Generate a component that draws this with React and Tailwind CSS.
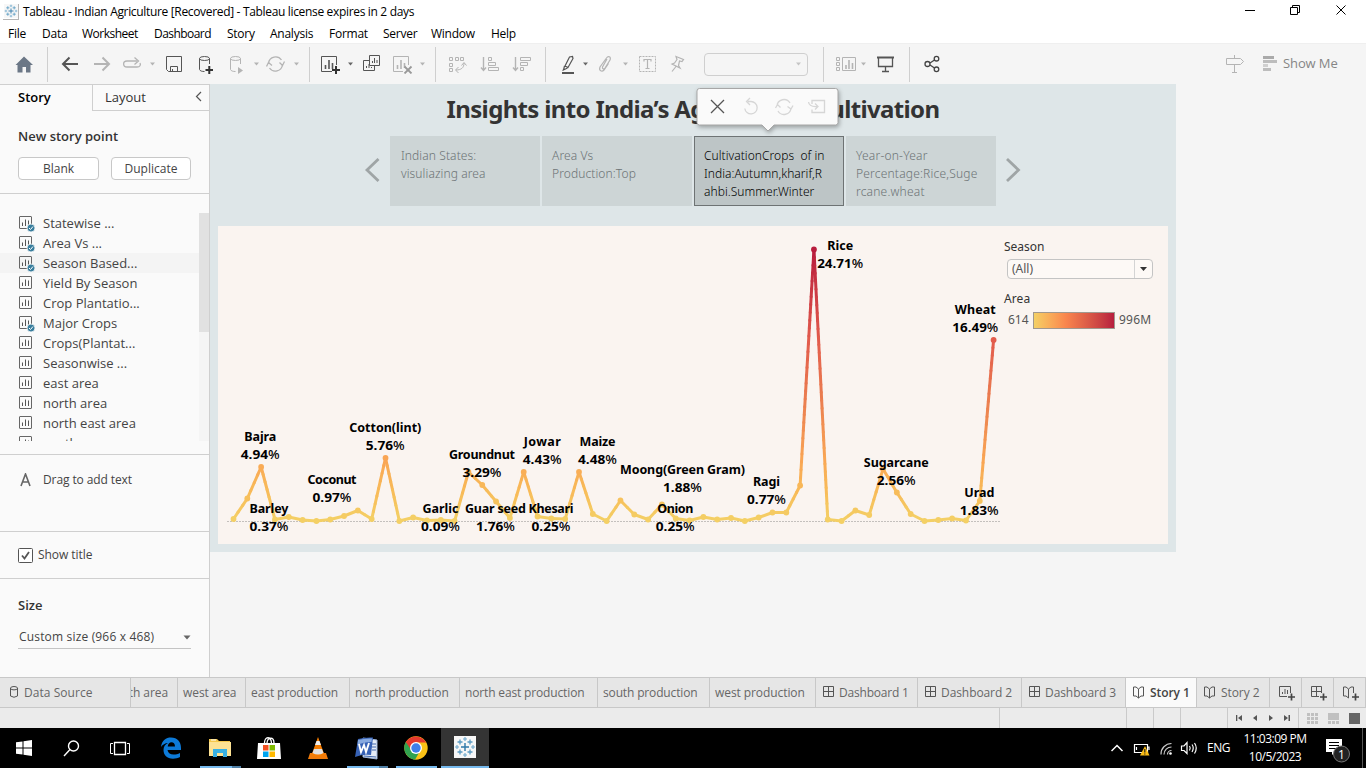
import React from "react";

const UI = "font-['Open_Sans','Noto_Sans',sans-serif]";
const LIGHT = "#b4b4b4";

/* Toolbar ------------------------------------------------------------- */

function Ic({ vb, w = 20, h = 20, c = "#666", className = "", children, sw = 1 }) {
  return (
    <svg className={"shrink-0 " + className} width={w} height={h} viewBox={vb} fill="none" stroke={c} strokeWidth={sw}>
      {children}
    </svg>
  );
}
function Caret({ className, c = "#b4b4b4" }) {
  return (
    <svg className={"shrink-0 " + className} width="7" height="6" viewBox="0 0 7 6">
      <path d="M1 1.5H6L3.5 4.5Z" fill={c} />
    </svg>
  );
}
const Sep = ({ className }) => <div className={"h-[35px] w-px shrink-0 bg-[#cfcfcf] " + className} />;

function Toolbar() {
  return (
    <div className="flex h-[41px] shrink-0 items-center border-t border-[#efefef] bg-[#f5f5f5]">
      <Ic className="ml-[14px]" vb="14 54 20 20">
        <path d="M24 56.5L33 65H30.5V72.5H26V67H22.5V72.5H17.5V65H15.5Z" fill="#6b7786" stroke="none" />
      </Ic>
      <Sep className="ml-[13px]" />
      <Ic className="ml-[12px]" vb="60 54 20 20" sw={2} c="#555"><path d="M78 64H63.5M69.5 57.5L63 64L69.5 70.5" /></Ic>
      <Ic className="ml-[12px]" vb="92 54 20 20" sw={2} c={LIGHT}><path d="M94 64H109M102.500 57.5L109 64L102.500 70.500" /></Ic>
      <Ic className="ml-[10px]" vb="122 54 20 20" sw={1.3} c={LIGHT}>
        <path d="M137 61H127C122.500 61 122.500 67 127 67H137C140 67 141 65 140 63" /><path d="M134.500 57.500L138.500 61L134.500 64.500" />
      </Ic>
      <Caret className="ml-[7px]" />
      <Ic className="ml-[8px]" vb="164 54 20 20" c="#555"><path d="M166.500 56.500H181.500V71.500H168.500L166.500 69.500ZM170.500 71.500V66.500H177.500V71.500M172.500 69V71" /></Ic>
      <Ic className="ml-[12px]" vb="196 54 20 20" c="#555">
        <ellipse cx="204.500" cy="58.500" rx="5" ry="2" /><path d="M199.500 58.500V69.500C200 71 202 71.500 204.500 71.500M209.500 58.500V64" /><path d="M205.500 70H213M209.300 66V74" stroke="#333" strokeWidth="2" />
      </Ic>
      <Ic className="ml-[12px]" vb="228 54 20 20" c={LIGHT}>
        <ellipse cx="235.500" cy="58.500" rx="5" ry="2" /><path d="M230.500 58.500V69.500C231 71 233 71.500 235.500 71.500M240.500 58.500V64" /><path d="M238 67L243 70.500L238 74Z" fill={LIGHT} stroke="none" />
      </Ic>
      <Caret className="ml-[5px]" />
      <Ic className="ml-[6px]" vb="266 54 20 20" c={LIGHT} sw={1.3}>
        <path d="M268.500 63A7.200 7.200 0 0 1 281.500 60M282.500 65A7.200 7.200 0 0 1 269.500 68" /><path d="M279.500 62.500L282.500 65.500L284.500 61.500M266.500 66.500L268.500 62.500L272 65.500" />
      </Ic>
      <Caret className="ml-[7px]" />
      <Sep className="ml-[9px]" />
      <Ic className="ml-[10px]" w={22} vb="320 54 22 20" c="#555">
        <path d="M336.500 65V56.500H321.500V71.500H332" /><path d="M325.500 65V69M329 60V69M332.500 63V69" strokeWidth="1.600" /><path d="M332 70H340M336 66V74" stroke="#333" strokeWidth="2" />
      </Ic>
      <Caret className="ml-[5px]" c="#666" />
      <Ic className="ml-[7px]" w={22} vb="361 54 22 20" c="#555">
        <path d="M369.500 55.500H379.500V65.500H369.500ZM369 60.500H363.500V70.500H374.500V66M372.500 63V61M374.500 63V58M377 63V60M366.500 68V66M369 68V64M371.500 68V67" />
      </Ic>
      <Ic className="ml-[9px]" w={22} vb="392 54 22 20" c={LIGHT}>
        <path d="M408.500 65V56.500H393.500V71.500H403" /><path d="M397.500 65V69M401 60V69M404.500 63V68" strokeWidth="1.600" /><path d="M404.500 66.500L411.500 73.500M411.500 66.500L404.500 73.500" strokeWidth="1.800" stroke="#999" />
      </Ic>
      <Caret className="ml-[5px]" />
      <Sep className="ml-[9px]" />
      <Ic className="ml-[12px]" vb="448 54 20 20" c={LIGHT}>
        <path d="M449.500 57.500H452.500V60.500H449.500ZM455.500 57.500H458.500V60.500H455.500ZM460.500 57.500H463.500V60.500H460.500ZM449.500 63.500H452.500V66.500H449.500ZM449.500 68.500H452.500V71.500H449.500Z" />
        <path d="M456 70C461 70 464 68 464 63M458.500 67L455.500 70L458.500 73M461.500 65.500L464 62.500L466.500 65.500" />
      </Ic>
      <Ic className="ml-[12px]" vb="480 54 20 20" c={LIGHT}>
        <path d="M483.500 57V70M481 67.500L483.500 70.500L486 67.500" strokeWidth="1.400" /><path d="M488.500 57.500H491.500V60.500H488.500ZM488.500 62.500H495.500V65.500H488.500ZM488.500 67.500H498.500V70.500H488.500Z" />
      </Ic>
      <Ic className="ml-[12px]" vb="512 54 20 20" c={LIGHT}>
        <path d="M515.500 57V70M513 67.500L515.500 70.500L518 67.500" strokeWidth="1.400" /><path d="M520.500 57.500H530.500V60.500H520.500ZM520.500 62.500H527.500V65.500H520.500ZM520.500 67.500H523.500V70.500H520.500Z" />
      </Ic>
      <Sep className="ml-[13px]" />
      <Ic className="ml-[14px]" vb="560 54 20 20" c="#555" sw={1.2}>
        <path d="M565 66L569.500 57L572.500 56.500L573 58.500L568 67.500L565 66ZM564.500 66L563.500 70L567.500 68M562.500 70.500L565 69" /><path d="M562 73H574" strokeWidth="2" />
      </Ic>
      <Caret className="ml-[2px]" c="#666" />
      <Ic className="ml-[6px]" vb="595 54 20 20" c={LIGHT} sw={1.2}>
        <path d="M607 59L602.500 67C602 69 604 69.500 605 68L610 60C611.500 56.500 608 55.500 606.500 58L600 67C598.500 71 602 72 604 70L608.500 63.500" />
      </Ic>
      <Caret className="ml-[7px]" />
      <Ic className="ml-[9px]" vb="638 54 20 20" c={LIGHT}>
        <path d="M639.500 56.500H655.500V71.500H639.500Z" strokeDasharray="2 1" /><path d="M644 61.500V59.500H651V61.500M647.500 59.500V68.500M645.500 68.500H649.500" strokeWidth="1.200" />
      </Ic>
      <Ic className="ml-[10px]" vb="668 54 20 20" c={LIGHT} sw={1.2}>
        <path d="M676 56.500L683.500 59.500L682 61.500L679.500 61L678.500 65.500L680 68L672 64L674.500 63L677 59.500L676 56.500ZM676 66.500L672 71.500" />
      </Ic>
      <div className="ml-[16px] flex h-[23px] w-[104px] shrink-0 items-center rounded-sm border border-[#cfcfcf]"><Caret className="ml-[90px]" c="#c4c4c4" /></div>
      <Sep className="ml-[15px]" />
      <Ic className="ml-[11px]" w={22} vb="835 54 22 20" c={LIGHT}>
        <path d="M836.500 57.500H839.500V60.500H836.500ZM836.500 62.500H839.500V65.500H836.500ZM836.500 67.500H839.500V70.500H836.500ZM842.500 57.500H855.500V70.500H842.500Z" /><path d="M846 65V69M849 60V69M852.500 63V69" strokeWidth="1.600" />
      </Ic>
      <Caret className="ml-[3px]" />
      <Ic className="ml-[9px]" vb="876 54 20 20" c="#555"><path d="M877 57.500H894" strokeWidth="2" /><path d="M878.500 58V66.500H892.500V58M885.500 67V71.500M882 71.500H889" strokeWidth="1.300" /></Ic>
      <Sep className="ml-[13px]" />
      <Ic className="ml-[12px]" vb="922 54 20 20" c="#444" sw={1.3}>
        <circle cx="927.500" cy="64" r="2.500" /><circle cx="936.500" cy="58.700" r="2.300" /><circle cx="936.500" cy="69.300" r="2.300" /><path d="M930 63L934.500 60M930 65L934.500 68" />
      </Ic>
      <Ic className="ml-[283px]" vb="1225 54 20 20" c="#b4b4b4"><path d="M1226.500 58.500H1240.500L1243.500 61.500L1240.500 64.500H1226.500ZM1234.500 55V58M1234.500 65V72.500M1232 72.500H1237" /></Ic>
      <Ic className="ml-[17px]" w={16} vb="1262 54 16 20" c="none">
        <path d="M1263 56H1274V59H1263Z" fill="#aaa" /><path d="M1263 60H1277V63H1263ZM1263 68H1271V71H1263Z" fill="#bdbdbd" /><path d="M1263 64H1268V67H1263Z" fill="#d0d0d0" />
      </Ic>
      <span className="-mt-[2px] ml-[5px] whitespace-nowrap text-[13px] leading-4 tracking-[-0.1px] text-[#858585]">Show Me</span>
    </div>
  );
}

/* Side pane ----------------------------------------------------------- */

const sheets = [
  ["Statewise ...", true], ["Area Vs ...", true], ["Season Based...", true], ["Yield By Season", false],
  ["Crop Plantatio...", false], ["Major Crops", true], ["Crops(Plantat...", false], ["Seasonwise ...", false],
  ["east area", false], ["north area", false], ["north east area", false], ["south area", false],
];

function SidePane() {
  return (
    <aside className="flex w-[210px] shrink-0 flex-col border-r border-t border-[#cfcfcf] bg-[#fafafa] text-[#444]">
      <div className="flex h-[26px] shrink-0">
        <div className="w-[92px] pl-[18px] pt-[2px] text-[13px] font-semibold leading-5 text-black">Story</div>
        <div className="flex flex-1 justify-between border-b border-l border-[#cfcfcf] pl-3 pr-[7px] pt-[2px] text-[13px] leading-5 text-[#333]">
          Layout
          <svg width="7" height="12" viewBox="0 0 7 12" className="mt-[4px]"><path d="M6 1L1.500 5.500L6 10" fill="none" stroke="#555" strokeWidth="1.200" /></svg>
        </div>
      </div>
      <div className="h-[83px] shrink-0 border-b border-[#cfcfcf] pl-[18px] pt-[15px]">
        <div className="text-[13px] font-semibold leading-5 text-[#333]">New story point</div>
        <div className="mt-[11px] flex gap-3 text-center text-[12px] leading-[21px]">
          <div className="h-[23px] w-[81px] rounded-sm border border-[#c8c8c8] bg-white">Blank</div>
          <div className="h-[23px] w-[80px] rounded-sm border border-[#c8c8c8] bg-white">Duplicate</div>
        </div>
      </div>
      <div className="h-[261px] shrink-0 border-b border-[#cfcfcf] pt-[19px]">
        <div className="flex h-[228px] overflow-hidden">
          <div className="flex-1">
            {sheets.map(([name, used], i) => (
              <div key={name} className={"flex h-5 items-center pl-[18px] " + (i === 2 ? "bg-[#f4f4f4]" : "")}>
                <svg width="17" height="18" viewBox="0 0 17 18" className="shrink-0" fill="none">
                  <rect x="1.500" y="2.500" width="12" height="12" rx="0.500" stroke="#666" />
                  <path d="M4.500 8.500V12M7.500 5.500V12M10.500 6.500V12" stroke="#555" />
                  {used && <g><circle cx="13" cy="14" r="4" fill="#3a7f9e" stroke="#fafafa" strokeWidth="0.800" /><path d="M11 14L12.500 15.500L15 12.500" stroke="#fff" /></g>}
                </svg>
                <span className="ml-2 whitespace-nowrap text-[13px] leading-5">{name}</span>
              </div>
            ))}
          </div>
          <div className="w-[10px] bg-[#f5f5f5]"><div className="h-[119px] bg-[#e1e1e1]" /></div>
        </div>
      </div>
      <div className="flex h-[77px] shrink-0 border-b border-[#cfcfcf] pl-[20px] pt-[16px] text-[12px] leading-[18px]">
        <svg width="12" height="14" viewBox="0 0 12 14" className="mt-[2px]"><path d="M1 13L5.500 1L10 13M2.500 9H8.500" fill="none" stroke="#666" strokeWidth="1.600" /></svg>
        <span className="ml-[11px] tracking-[-0.1px]">Drag to add text</span>
      </div>
      <div className="flex h-[47px] shrink-0 items-center border-b border-[#cfcfcf] pl-[18px] text-[12px]">
        <svg width="15" height="15" viewBox="0 0 15 15" fill="none"><rect x="0.500" y="0.500" width="14" height="14" rx="1" stroke="#555" fill="#fff" /><path d="M4 7.500L6.500 10.500L11 4" stroke="#555" strokeWidth="1.800" /></svg>
        <span className="ml-[5px] tracking-[-0.05px]">Show title</span>
      </div>
      <div className="pl-[18px] pt-[16px]">
        <div className="text-[13px] font-semibold leading-5 text-[#333]">Size</div>
        <div className="mt-[11px] flex h-[23px] w-[173px] items-center justify-between border-b border-[#c4c4c4] pl-px text-[12px] tracking-[0.17px]">
          Custom size (966 x 468)
          <svg width="8" height="5" viewBox="0 0 8 5"><path d="M0.500 0.500H7.500L4 4.500Z" fill="#666" /></svg>
        </div>
      </div>
    </aside>
  );
}

/* Chart --------------------------------------------------------------- */

const ys = [519, 498.5, 467, 519.5, 517, 520, 521, 519.5, 516, 510.5, 519, 458, 521, 517.5, 520.5, 520, 521, 472, 485, 501.5, 518, 472, 516.5, 518.5, 519, 472, 514, 521, 500.5, 514.5, 519.5, 504.5, 518.5, 520.5, 517, 519.5, 518, 521, 517.5, 512.5, 512.5, 485.5, 249.5, 519.5, 521, 510.5, 515, 469, 492.5, 514, 521, 520, 518.5, 520.5, 501, 340];
const pts = ys.map((y, i) => [233.5 + i * 13.82, y]);
const stops = [[0, [244, 208, 101]], [0.12, [248, 185, 88]], [0.23, [249, 165, 84]], [0.42, [236, 130, 80]], [0.67, [226, 91, 76]], [1, [184, 29, 61]]];
function shade(y) {
  const t = Math.max(0, Math.min(1, (521 - y) / 271.5));
  for (let i = 1; i < stops.length; i++) {
    if (t <= stops[i][0]) {
      const [a, ca] = stops[i - 1];
      const [b, cb] = stops[i];
      const f = (t - a) / (b - a);
      return `rgb(${ca.map((v, k) => Math.round(v + (cb[k] - v) * f)).join(",")})`;
    }
  }
  return "rgb(184,29,61)";
}
const segs = pts.slice(1).flatMap(([x2, y2], i) => {
  const [x1, y1] = pts[i];
  const n = Math.max(1, Math.ceil(Math.abs(y2 - y1) / 8));
  return Array.from({ length: n }, (_, k) => ({
    x1: x1 + ((x2 - x1) * k) / n, y1: y1 + ((y2 - y1) * k) / n,
    x2: x1 + ((x2 - x1) * (k + 1)) / n, y2: y1 + ((y2 - y1) * (k + 1)) / n,
  }));
});
/* name, value, centre, baseline of name, width of name */
const labels = [
  ["Bajra", "4.94%", 260.3, 441, 32], ["Barley", "0.37%", 269, 513, 39], ["Coconut", "0.97%", 332, 484, 49],
  ["Cotton(lint)", "5.76%", 385.3, 432, 72], ["Garlic", "0.09%", 440.5, 513, 36], ["Groundnut", "3.29%", 482, 459, 66],
  ["Guar seed", "1.76%", 495.5, 513, 61], ["Jowar", "4.43%", 542.3, 446, 37], ["Khesari", "0.25%", 551, 513, 45],
  ["Maize", "4.48%", 597.5, 446, 36], ["Moong(Green Gram)", "1.88%", 682.5, 474, 125], ["Onion", "0.25%", 675.3, 513, 36],
  ["Ragi", "0.77%", 766.5, 486, 27], ["Rice", "24.71%", 840.2, 250, 26], ["Sugarcane", "2.56%", 896.3, 467, 65],
  ["Urad", "1.83%", 979.3, 497, 30], ["Wheat", "16.49%", 975.3, 314, 41],
];

function Chart() {
  return (
    <svg className="shrink-0" width="784" height="318" viewBox="218 226 784 318" fontFamily="'Noto Sans', sans-serif" fontSize="12.500" fontWeight="700">
      <path d="M227 521.500H1000" stroke="#c4c0bd" strokeDasharray="2 1" />
      {segs.map((s, i) => <line key={i} {...s} stroke={shade((s.y1 + s.y2) / 2)} strokeWidth="3" strokeLinecap="round" />)}
      {pts.map(([x, y], i) => <circle key={i} cx={x} cy={y} r="2.900" fill={shade(y)} />)}
      {labels.map(([name, value, x, y, w]) => {
        const vw = value.length > 5 ? 46 : 39;
        return (
          <g key={name} fill="#000">
            <text x={x - w / 2} y={y} textLength={w}>{name}</text>
            <text x={x - vw / 2} y={y + 18} textLength={vw} lengthAdjust="spacingAndGlyphs">{value.slice(0, -1)}<tspan fontWeight="500">%</tspan></text>
          </g>
        );
      })}
    </svg>
  );
}

function Legend() {
  return (
    <div className="w-[150px] pl-[2px] pt-[12px] font-['Noto_Sans',sans-serif] text-[12px] leading-[18px] text-[#333]">
      <div>Season</div>
      <div className="ml-[3px] mt-[3px] flex h-5 w-[146px] rounded-sm border border-[#c4c4c4] bg-[#fdf9f6] text-[#555]">
        <span className="flex-1 pl-1">(All)</span>
        <span className="flex w-[18px] items-center justify-center border-l border-[#d4d4d4]">
          <svg width="7" height="4" viewBox="0 0 7 4"><path d="M0 0H7L3.500 4Z" fill="#333" /></svg>
        </span>
      </div>
      <div className="mt-[11px] tracking-[0.1px]">Area</div>
      <div className="mt-[3px] flex items-center text-[#555]">
        <span className="w-[29px] pl-1">614</span>
        <span className="h-[17px] w-[82px] border border-[#a0988f] bg-linear-to-r from-[#f4d065] via-[#f9854d] via-40% to-[#b71d3e]" />
        <span className="ml-1 tracking-[0.2px]">996M</span>
      </div>
    </div>
  );
}

/* Story --------------------------------------------------------------- */

const dim = "border-[#cdd5d6] bg-[#cdd5d6] text-[#6c7375]";
function Story() {
  return (
    <section className="relative h-[468px] w-[966px] bg-[#dee6e8]">
      <h1 className="h-[52px] pt-[8px] text-center font-['Noto_Sans',sans-serif] text-[24px] font-bold leading-[34px] tracking-[-0.66px] text-[#333]">Insights into India’s Agricultural Cultivation</h1>
      <div className="flex h-[70px] items-center pl-[154px] font-['Noto_Sans',sans-serif] text-[12px] font-light leading-[18px]">
        <svg width="16" height="26" viewBox="0 0 16 26" className="mr-[10px]"><path d="M14.500 1L3 12L14.500 23" fill="none" stroke="#9fa5a6" strokeWidth="2.800" /></svg>
        <div className="flex gap-[2px]">
          <div className={"h-[70px] w-[150px] whitespace-nowrap border pl-[10px] pt-[10px] tracking-[0.1px] " + dim}>Indian States:<br />visuliazing area</div>
          <div className={"h-[70px] w-[150px] whitespace-nowrap border pl-[9px] pt-[10px] tracking-[0.1px] " + dim}>Area Vs<br />Production:Top</div>
          <div className="h-[70px] w-[150px] whitespace-pre border border-[#6e7374] bg-[#bdc5c6] pl-[9px] pt-[10px] tracking-[0.05px] text-black">CultivationCrops  of in<br />India:Autumn,kharif,R<br />ahbi.Summer.Winter</div>
          <div className={"h-[70px] w-[150px] whitespace-nowrap border pl-[9px] pt-[10px] tracking-[0.2px] " + dim}>Year-on-Year<br />Percentage:Rice,Suge<br />rcane.wheat</div>
        </div>
        <svg width="16" height="26" viewBox="0 0 16 26" className="ml-[9px]"><path d="M2 1L13.500 12L2 23" fill="none" stroke="#9fa5a6" strokeWidth="2.800" /></svg>
      </div>
      <div className="ml-2 mt-5 flex h-[318px] w-[950px] bg-[#faf4f0]"><Chart /><Legend /></div>
      <svg className="absolute left-[482px] top-0 drop-shadow-[1px_2px_2px_rgba(0,0,0,0.3)]" width="152" height="52" viewBox="692 84 152 52" fill="none">
        <path d="M699.500 88.500H835.500Q838 88.500 838 91V122.500Q838 125 835.500 125H774L768 131L762 125H699.500Q697 125 697 122.500V91Q697 88.500 699.500 88.500Z" fill="#fafafa" stroke="#a7a7a7" />
        <path d="M711 100L724 113M724 100L711 113" stroke="#555" strokeWidth="1.300" />
        <g stroke="#d6d6d6" strokeWidth="1.300">
          <path d="M747.500 101.500H751A6.200 6.200 0 1 1 744.800 108.500M750 98L746.500 101.500L750 105" />
          <path d="M777 106A7 7 0 0 1 790 103M791 108A7 7 0 0 1 778 111M775.500 108L777.500 104.500L780.500 107.500M787.500 106.500L791 109L793 105.500" />
          <path d="M812 104V100.500H824.500V112.500H812V109.500M808.500 102C809 105 811 107 817 106.500M815 103.500L818 106.500L815 109.500" />
        </g>
      </svg>
    </section>
  );
}

/* Sheet tabs ---------------------------------------------------------- */

const Tab = ({ className = "", children }) => (
  <div className={"flex h-full shrink-0 items-center whitespace-nowrap border-r border-[#c8c8c8] pl-[5px] " + className}>{children}</div>
);
const GridIc = () => (
  <svg width="12" height="12" viewBox="0 0 12 12" className="mb-px mr-1"><path d="M0.500 0.500H10.500V10.500H0.500ZM5.500 0.500V10.500M0.500 5.500H10.500" fill="none" stroke="#555" /></svg>
);
const BookIc = () => (
  <svg width="12" height="13" viewBox="0 0 12 13" className="mb-px mr-[5px]"><path d="M5.500 3L3 1H0.500V10H3L5.500 12L8 10H10.500V1H8L5.500 3V12" fill="none" stroke="#555" /></svg>
);
const Plus = () => <path d="M9 12H16M12.500 8.500V15.500" stroke="#444" strokeWidth="1.700" />;

function Tabs() {
  return (
    <div className="flex h-[31px] shrink-0 border-y border-[#c8c8c8] bg-[#e6e6e6] text-[12px] tracking-[-0.08px] text-[#666]">
      <Tab className="w-[131px] pl-[10px]!">
        <svg width="9" height="12" viewBox="0 0 9 12" className="mr-[5px] mb-[2px]" fill="none" stroke="#555"><ellipse cx="4" cy="2.200" rx="3.500" ry="1.700" /><path d="M0.500 2V10Q4 12.500 7.500 10V2" /></svg><span className="tracking-[0.05px]">Data Source</span>
      </Tab>
      <Tab className="w-[47px] justify-end overflow-hidden pl-0! pr-[9px]">south area</Tab>
      <Tab className="w-[68px]">west area</Tab>
      <Tab className="w-[104px]">east production</Tab>
      <Tab className="w-[110px] tracking-[-0.15px]">north production</Tab>
      <Tab className="w-[138px] tracking-[-0.15px]">north east production</Tab>
      <Tab className="w-[112px] tracking-[-0.15px]">south production</Tab>
      <Tab className="w-[106px]">west production</Tab>
      <Tab className="w-[102px] pl-[7px]! tracking-[-0.2px]"><GridIc />Dashboard 1</Tab>
      <Tab className="w-[104px] pl-[7px]!"><GridIc />Dashboard 2</Tab>
      <Tab className="w-[104px] pl-[7px]!"><GridIc />Dashboard 3</Tab>
      <Tab className="w-[71px] bg-[#fafafa] pl-[7px]! font-semibold text-[#444]"><BookIc />Story 1</Tab>
      <Tab className="w-[73px] pl-[7px]!"><BookIc />Story 2</Tab>
      <Tab className="w-8 pl-[9px]!"><svg width="17" height="16" viewBox="0 0 17 16" fill="none" stroke="#555"><path d="M11.500 8V1.500H0.500V11.500H8M3.500 9V7M6 9V4M8.500 9V5" /><Plus /></svg></Tab>
      <Tab className="w-8 pl-[9px]!"><svg width="17" height="16" viewBox="0 0 17 16" fill="none" stroke="#555"><path d="M10.500 8V1.500H0.500V11.500H8M5.500 1.500V11.500M0.500 6.500H10.500" /><Plus /></svg></Tab>
      <Tab className="w-8 pl-[9px]!"><svg width="17" height="16" viewBox="0 0 17 16" fill="none" stroke="#555"><path d="M5.500 4L3 2H0.500V11H3L5.500 13M5.500 4V13M5.500 4L8 2H10.500V8" /><Plus /></svg></Tab>
    </div>
  );
}

function Status() {
  const cell = "h-full border-r border-[#cacaca] ";
  return (
    <div className="flex h-5 shrink-0 items-center bg-[#ebebeb]">
      <div className={cell + "w-[1000px]"} />
      <div className={cell + "w-[127px]"} />
      <div className={cell + "w-[27px]"} />
      <div className={cell + "w-[27px]"} />
      <div className={cell + "w-[47px]"} />
      <div className={cell + "flex w-[71px] items-center pl-2"}>
        <svg width="55" height="8" viewBox="0 0 55 8" fill="#555"><path d="M0 1H1.300V7H0ZM6 1V7L2 4ZM21 1V7L17 4ZM33 1V7L37 4ZM48 1V7L52 4ZM52.500 1H54V7H52.500Z" /></svg>
      </div>
      <svg className="mb-px ml-2" width="54" height="12" viewBox="1307 711 54 12" fill="#c0c0c0">
        {[0, 1, 2].flatMap((r) => [0, 1, 2].map((c) => <rect key={r + "-" + c} x={1307 + c * 4} y={712 + r * 4} width="3" height="3" />))}
        <path d="M1328 712H1339V719H1328ZM1328 720H1331V723H1328ZM1332 720H1335V723H1332ZM1336 720H1339V723H1336Z" />
        <rect x="1349" y="712" width="11" height="11" fill="#666" />
      </svg>
    </div>
  );
}

/* Taskbar ------------------------------------------------------------- */

function TableauMark({ size, className = "" }) {
  const cross = (x, y, r, c, w) => <path key={x + "," + y} d={`M${x - r} ${y}H${x + r}M${x} ${y - r}V${y + r}`} stroke={c} strokeWidth={w} />;
  return (
    <svg width={size} height={size} viewBox="0 0 22 22" className={"shrink-0 " + className}>
      <rect width="22" height="22" fill="#f7f7f7" />
      {cross(11, 11, 4, "#2f78a8", 1.4)}
      {[[6, 6], [16, 6], [6, 16], [16, 16]].map(([x, y]) => cross(x, y, 2.5, "#5a9bc2", 1.3))}
      {[[11, 3], [11, 19], [3, 11], [19, 11]].map(([x, y]) => cross(x, y, 2, "#6fa9cd", 1.1))}
    </svg>
  );
}

function TaskButton({ children, bar, className = "w-[49px]" }) {
  return (
    <div className={"flex h-10 shrink-0 flex-col items-center " + className}>
      <div className="flex h-[38px] items-center pr-[2px] pt-[2px]">{children}</div>
      {bar && <div className="flex h-[2px] w-full px-1"><i className="flex-1 bg-[#76b9ed]" />{bar === 2 && <i className="w-[9px] bg-[#4f7fa5]" />}</div>}
    </div>
  );
}

function Taskbar() {
  return (
    <div className="flex h-10 shrink-0 bg-black text-white">
      <TaskButton className="w-12 pl-[2px]"><svg width="16" height="16" viewBox="0 0 16 16" fill="#fff"><path d="M0 2.300L6.500 1.400V7.500H0ZM7.500 1.200L16 0V7.500H7.500ZM0 8.500H6.500V14.600L0 13.700ZM7.500 8.500H16V16L7.500 14.800Z" /></svg></TaskButton>
      <TaskButton className="w-12 pl-px"><svg width="17" height="17" viewBox="0 0 17 17" fill="none" stroke="#fff" strokeWidth="1.400"><circle cx="10.500" cy="6" r="5" /><path d="M7 9.500L1 16" /></svg></TaskButton>
      <TaskButton className="w-[51px] pr-px"><svg width="20" height="15" viewBox="0 0 20 15" fill="none" stroke="#fff"><path d="M4.500 1.500H15.500V13.500H4.500Z" strokeWidth="1.300" /><path d="M3 2.500H0.500V12.500H3M17 2.500H19.500V12.500H17" /></svg></TaskButton>
      <TaskButton><svg width="22" height="22" viewBox="0 0 22 22"><path d="M1 10C2 3 6 0.500 11 0.500C17.500 0.500 21 5 21 11V13H7.500C8 16 10.500 17.500 13.500 17.500C16 17.500 18 17 20 16V20C18 21.200 15.500 21.700 13 21.700C7 21.700 3.500 18 3.500 13C3.500 9.500 5 7.500 8 6C5 6.200 2.800 7.500 1 10ZM7.700 9.500H15C15 6.700 13.500 5.200 11.500 5.200C9.500 5.200 8 7 7.700 9.500Z" fill="#0d7ad8" /></svg></TaskButton>
      <TaskButton bar={2}><svg width="22" height="20" viewBox="0 0 22 20"><path d="M0 1H8L10 3H21V18H0Z" fill="#f5c84c" /><path d="M0 4H22V18H0Z" fill="#fde293" /><path d="M4 11H18V19H14V15H8V19H4Z" fill="#38b0e3" /><path d="M2 2H7" stroke="#fff" /></svg></TaskButton>
      <TaskButton><svg width="24" height="24" viewBox="0 0 24 24"><path d="M1 7H23L24 23H0Z" fill="#fff" /><path d="M7.500 7C7.500 0 14 0 14.500 7M10 7C10.500 1 17 0 17 7" fill="none" stroke="#fff" strokeWidth="1.300" /><path d="M6 9H11.500V14.500H6Z" fill="#f25022" /><path d="M12.500 9H18V14.500H12.500Z" fill="#7fba00" /><path d="M6 15.500H11.500V21H6Z" fill="#00a4ef" /><path d="M12.500 15.500H18V21H12.500Z" fill="#ffb900" /></svg></TaskButton>
      <TaskButton><svg width="20" height="22" viewBox="0 0 20 22"><path d="M2 16H18L20 22H0Z" fill="#ee7a0a" /><path d="M10 0L16.500 18Q10 21 3.500 18Z" fill="#f57c00" /><path d="M8.500 4H11.500L13 8H7Z" fill="#eee" /><path d="M6 12H14L15.500 16Q10 19 4.500 16Z" fill="#e0e0e0" /></svg></TaskButton>
      <TaskButton bar={2}><svg width="23" height="23" viewBox="0 0 23 23"><path d="M8 1L22 3V22L8 20Z" fill="#e6edf7" stroke="#9db4d8" /><path d="M3 2Q10 0 18 0.500L16 18Q8 17 0 20Z" fill="#3762b5" /><path d="M3 3Q10 1 17 1.500L16.500 5Q8 5 2.500 8Z" fill="#87a9df" /><path d="M4 7L6 15L9 8L11 15L14 6" fill="none" stroke="#fff" strokeWidth="1.900" /><path d="M17 7H21M17 10H21M17 13H21M9 19L21 20" stroke="#4269ad" /></svg></TaskButton>
      <TaskButton bar={1}><svg width="24" height="24" viewBox="0 0 24 24"><circle cx="12" cy="12" r="11.700" fill="#fbc116" /><path d="M12 12L1.700 6A12 12 0 0 0 11 23.700L16.500 14Z" fill="#31a350" /><path d="M1.800 6A12 12 0 0 1 22.300 6.500H12L7.500 14.500Z" fill="#e5392e" /><circle cx="12" cy="12" r="6" fill="#fff" /><circle cx="12" cy="12" r="4.700" fill="#3f7fea" /></svg></TaskButton>
      <div className="flex w-12 shrink-0 flex-col items-center border-b-2 border-[#76b9ed] bg-[#343434] pr-px pt-2"><TableauMark size={22} /></div>
      <div className="flex flex-1 items-center justify-end">
        <svg width="88" height="20" viewBox="1111 738 88 20" fill="none" stroke="#fff" strokeWidth="1.200">
          <path d="M1111.500 751L1117 745.500L1122.500 751" strokeWidth="1.500" />
          <path d="M1134.500 744.500H1147.500V752.500H1134.500ZM1148 747H1149V750M1136.500 747V750" /><path d="M1145 746L1149.500 755.500H1140Z" fill="#fbbd16" stroke="none" /><path d="M1144.800 749V752.500M1144.800 753.500V754.500" stroke="#222" />
          <circle cx="1170.500" cy="753.500" r="1.300" fill="#fff" stroke="none" /><path d="M1167.500 754.500A4 4 0 0 1 1171.500 750.500M1164 754.500A7.500 7.500 0 0 1 1171.500 747M1161 754.500A10.500 10.500 0 0 1 1171.500 743.500" stroke="#ccc" />
          <path d="M1181.500 746H1184L1187 742.500V753.500L1184 750.500H1181.500ZM1189.500 746Q1191 748 1189.500 750.500M1192 744.500Q1194.500 748 1192 752M1194.500 743Q1198 748 1194.500 753.500" />
        </svg>
        <span className="ml-2 w-[26px] whitespace-nowrap text-[12px] tracking-[-0.5px]">ENG</span>
        <div className="ml-[7px] w-[70px] whitespace-nowrap text-center text-[12px] leading-[18px] tracking-[-0.5px]">11:03:09 PM<br />10/5/2023</div>
        <svg className="ml-[15px] mr-[11px] mt-1" width="26" height="26" viewBox="1324 738 26 26">
          <path d="M1325 740H1341V753H1334L1331 756V753H1325Z" fill="#fff" /><path d="M1328 743.500H1338M1328 746.500H1338M1328 749.500H1338" stroke="#000" />
          <circle cx="1340.500" cy="755" r="8" fill="#222" stroke="#777" /><text x="1340.500" y="759.500" textAnchor="middle" fill="#fff" fontSize="12" fontFamily="Open Sans">1</text>
        </svg>
        <div className="mr-[3px] h-full w-px bg-[#555]" />
      </div>
    </div>
  );
}

export default function App() {
  return (
    <div className={"flex h-[768px] w-[1366px] flex-col overflow-hidden bg-white antialiased " + UI}>
      <header className="flex h-[23px] shrink-0 items-center text-[12px] text-black">
        <div className="ml-[3px] flex size-4 items-center justify-center border-b border-r border-[#b5b5b5]"><TableauMark size={14} /></div>
        <span className="ml-1 whitespace-nowrap tracking-[-0.33px]">Tableau - Indian Agriculture [Recovered] - Tableau license expires in 2 days</span>
        <svg className="mb-[3px] ml-auto mr-[18px]" width="104" height="14" viewBox="1244 3 104 14" fill="none" stroke="#000">
          <path d="M1245 10.500H1255M1290.500 7.500H1297.500V14.500H1290.500ZM1292.500 7.500V5.500H1299.500V12.500H1297.500M1336.500 5.500L1345.500 14.500M1345.500 5.500L1336.500 14.500" />
        </svg>
      </header>
      <nav className="flex h-5 shrink-0 items-center whitespace-nowrap pt-[2px] text-[12px] tracking-[-0.25px] text-black">
        <span className="ml-2 w-[34px]">File</span><span className="w-[40px]">Data</span><span className="w-[72px] tracking-[-0.5px]">Worksheet</span><span className="w-[73px] tracking-[-0.55px]">Dashboard</span>
        <span className="w-[43px]">Story</span><span className="w-[59px]">Analysis</span><span className="w-[54px]">Format</span><span className="w-[48px]">Server</span><span className="w-[60px]">Window</span><span>Help</span>
      </nav>
      <Toolbar />
      <main className="flex h-[593px] shrink-0 bg-[#f5f5f5]"><SidePane /><Story /></main>
      <Tabs />
      <Status />
      <Taskbar />
    </div>
  );
}
